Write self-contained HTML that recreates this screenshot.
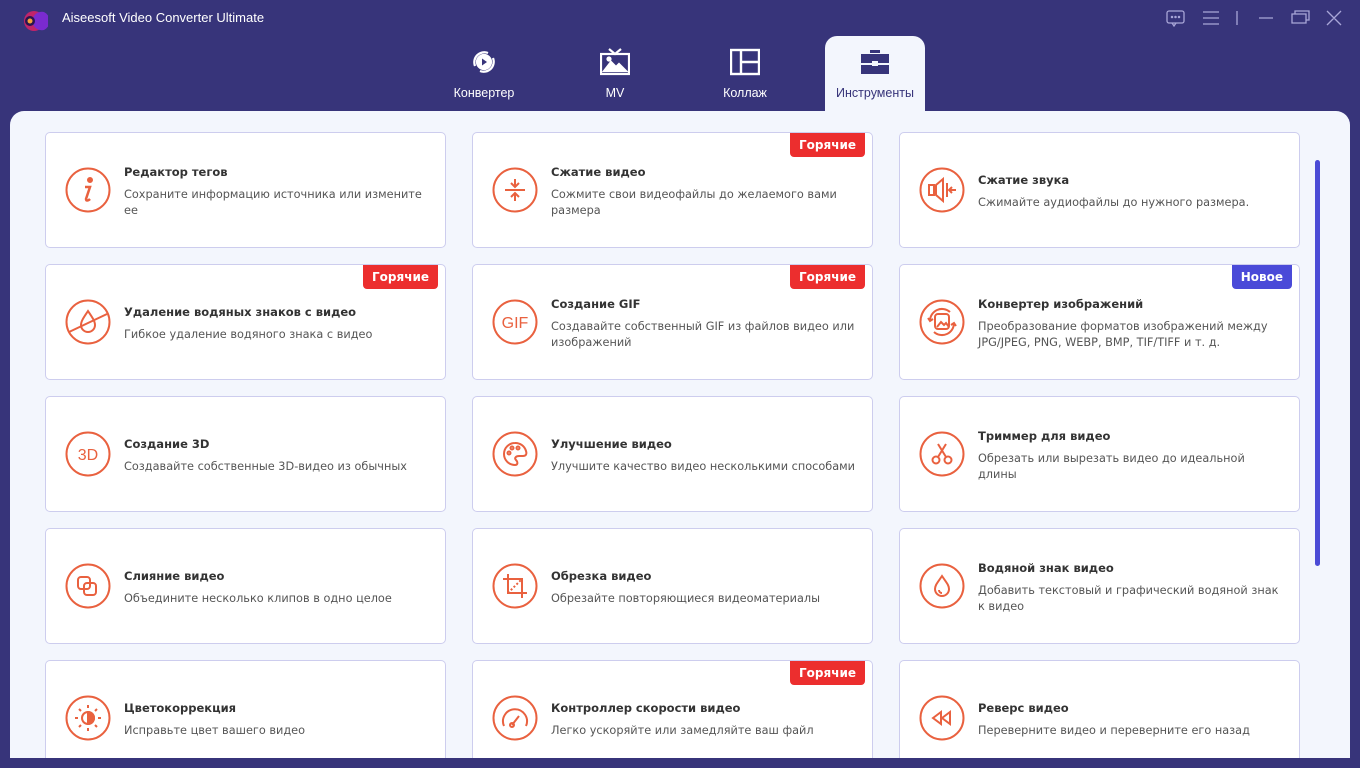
<!DOCTYPE html>
<html style="overflow:hidden"><head><meta charset="utf-8"><style>
*{margin:0;padding:0;box-sizing:border-box}
html,body{width:1360px;height:768px;overflow:hidden}
body{background:#37347a;position:relative;font-family:"DejaVu Sans","Liberation Sans",sans-serif}
.title{position:absolute;left:62px;top:10px;color:#fff;font-size:13px;font-family:"Liberation Sans",sans-serif}
.panel{position:absolute;left:10px;top:111px;width:1340px;height:647px;background:#f3f6fd;border-radius:14px 14px 0 0;overflow:hidden}
.tab{position:absolute;top:36px;width:100px;height:76px;color:#fff;font-size:12.5px;text-align:center;font-family:"Liberation Sans",sans-serif}
.tab svg{display:block;margin:11px auto 9px}
.tab.act{background:#f3f6fd;color:#37347a;border-radius:12px 12px 0 0}
.card{position:absolute;width:401px;height:116px;background:#fff;border:1px solid #cdcdee;border-radius:5px;overflow:hidden}
.card .ic{position:absolute;left:19px;top:34px;width:46px;height:46px}
.card h3{position:absolute;left:78px;font-size:11.5px;font-weight:bold;color:#333}
.card p{position:absolute;left:78px;width:310px;font-size:11.3px;color:#555;line-height:16px}
.badge{position:absolute;right:7px;top:0;height:24px;padding:0 9px;color:#fff;font-weight:bold;font-size:12px;line-height:24px;background:#ec2e2e;border-radius:0 0 4px 4px}
.badge.new{background:#4a4ad8}
.sb{position:absolute;left:1305px;top:49px;width:5px;height:406px;background:#4b4bd6;border-radius:3px}
.last{height:98px;border-bottom:none;border-radius:5px 5px 0 0}
</style></head><body>
<svg style="position:absolute;left:20px;top:8px" width="28" height="26" viewBox="0 0 28 26"><path d="M4 13a10 10 0 1 1 20 0a10 10 0 1 1-20 0z" fill="#c0246a"/><path d="M12 13a10 10 0 0 1 12-9a10 10 0 0 1 0 18a10 10 0 0 1-12-9z" fill="#7a2bd0"/><circle cx="10" cy="13" r="5" fill="#2a1550"/><circle cx="10" cy="13" r="2.5" fill="#f7a23a"/></svg>
<div class="title">Aiseesoft Video Converter Ultimate</div>
<svg style="position:absolute;left:1166px;top:9px" width="180" height="18" fill="none" stroke="#a9a6d8" stroke-width="1.3"><rect x="1" y="2" width="17" height="12" rx="2"/><path d="M6 14l2 3 2-3"/><circle cx="6" cy="8" r=".6" fill="#a9a6d8"/><circle cx="9.5" cy="8" r=".6" fill="#a9a6d8"/><circle cx="13" cy="8" r=".6" fill="#a9a6d8"/><path d="M37 3h16M37 9h16M37 15h16M71 2v14M93 9h14M126 5h14v9h-14zM129 5v-3h14v9h-3M161 2l14 14M175 2l-14 14"/></svg>
<div class="tab" style="left:434px"><svg width="30" height="30" viewBox="0 0 30 30" fill="none" stroke="#fff" stroke-width="2.2"><path d="M6 19a10 10 0 0 1 13-13M24 11a10 10 0 0 1-13 13"/><circle cx="15" cy="15" r="7" fill="#fff"/><path d="M13 11.5l5 3.5-5 3.5z" fill="#37347a" stroke="none"/></svg>Конвертер</div>
<div class="tab" style="left:565px"><svg width="30" height="30" viewBox="0 0 30 30" fill="none" stroke="#fff" stroke-width="2.2"><rect x="1" y="7" width="28" height="20"/><path d="M9 2l6 5 6-5"/><path d="M4 24l7-9 5 5 3-3 7 7z" fill="#fff"/><circle cx="9" cy="12" r="1.5" fill="#fff"/></svg>MV</div>
<div class="tab" style="left:695px"><svg width="30" height="30" viewBox="0 0 30 30" fill="none" stroke="#fff" stroke-width="2.4"><rect x="1" y="3" width="28" height="24"/><path d="M11 3v24M11 15h18"/></svg>Коллаж</div>
<div class="tab act" style="left:825px"><svg width="30" height="30" viewBox="0 0 30 30" fill="#37347a"><rect x="10" y="3" width="10" height="3"/><rect x="1" y="7" width="28" height="9"/><rect x="1" y="18" width="28" height="9"/><rect x="12" y="14" width="6" height="5" fill="#f3f6fd"/></svg>Инструменты</div>
<div class="panel"><div class="sb"></div></div>

<div class="card" style="left:45px;top:132px"><svg class="ic" viewBox="0 0 46 46" fill="none" stroke="#e9613f" stroke-width="2"><circle cx="23" cy="23" r="21.5"/><circle cx="25" cy="13" r="2" fill="#e9613f"/><path d="M20 20h5l-4 12c0 2 2 2 4 0" stroke-width="2.5"/></svg><h3 style="top:32px">Редактор тегов</h3><p style="top:54px">Сохраните информацию источника или измените ее</p></div>
<div class="card" style="left:472px;top:132px"><div class="badge">Горячие</div><svg class="ic" viewBox="0 0 46 46" fill="none" stroke="#e9613f" stroke-width="2"><circle cx="23" cy="23" r="21.5"/><path d="M13 23h20M23 12v7M19 16l4 4 4-4M23 34v-7M19 30l4-4 4 4"/></svg><h3 style="top:32px">Сжатие видео</h3><p style="top:54px">Сожмите свои видеофайлы до желаемого вами размера</p></div>
<div class="card" style="left:899px;top:132px"><svg class="ic" viewBox="0 0 46 46" fill="none" stroke="#e9613f" stroke-width="2"><circle cx="23" cy="23" r="21.5"/><rect x="10" y="18" width="5" height="10"/><path d="M17 18l7-6v22l-7-6zM28 16v14M37 23h-7M33 20l-3 3 3 3"/></svg><h3 style="top:40px">Сжатие звука</h3><p style="top:62px">Сжимайте аудиофайлы до нужного размера.</p></div>

<div class="card" style="left:45px;top:264px"><div class="badge">Горячие</div><svg class="ic" viewBox="0 0 46 46" fill="none" stroke="#e9613f" stroke-width="2"><circle cx="23" cy="23" r="21.5"/><path d="M23 12c-4 6-7 10-7 14a7 7 0 0 0 14 0c0-4-3-8-7-14zM4 33l38-18"/></svg><h3 style="top:40px">Удаление водяных знаков с видео</h3><p style="top:62px">Гибкое удаление водяного знака с видео</p></div>
<div class="card" style="left:472px;top:264px"><div class="badge">Горячие</div><svg class="ic" viewBox="0 0 46 46" fill="none" stroke="#e9613f" stroke-width="2"><circle cx="23" cy="23" r="21.5"/><text x="23" y="29" text-anchor="middle" fill="#e9613f" stroke="none" font-family="Liberation Sans" font-size="16">GIF</text></svg><h3 style="top:32px">Создание GIF</h3><p style="top:54px">Создавайте собственный GIF из файлов видео или изображений</p></div>
<div class="card" style="left:899px;top:264px"><div class="badge new">Новое</div><svg class="ic" viewBox="0 0 46 46" fill="none" stroke="#e9613f" stroke-width="2"><circle cx="23" cy="23" r="21.5"/><rect x="16" y="15" width="14" height="15" rx="3"/><path d="M18 28l4-5 3 3 2-2 3 4"/><path d="M11 22a12 12 0 0 1 20-9M35 24a12 12 0 0 1-20 9M9 19l2 3 3-2M37 27l-2-3-3 2"/></svg><h3 style="top:32px">Конвертер изображений</h3><p style="top:54px">Преобразование форматов изображений между JPG/JPEG, PNG, WEBP, BMP, TIF/TIFF и т. д.</p></div>

<div class="card" style="left:45px;top:396px"><svg class="ic" viewBox="0 0 46 46" fill="none" stroke="#e9613f" stroke-width="2"><circle cx="23" cy="23" r="21.5"/><text x="23" y="29" text-anchor="middle" fill="#e9613f" stroke="none" font-family="Liberation Sans" font-size="16">3D</text></svg><h3 style="top:40px">Создание 3D</h3><p style="top:62px;width:320px">Создавайте собственные 3D-видео из обычных</p></div>
<div class="card" style="left:472px;top:396px"><svg class="ic" viewBox="0 0 46 46" fill="none" stroke="#e9613f" stroke-width="2"><circle cx="23" cy="23" r="21.5"/><path d="M23 12a11 11 0 0 0 0 22c3 0 3-3 1-5s0-4 3-4h4c3 0 4-2 3-5a11 11 0 0 0-11-8z"/><circle cx="17" cy="22" r="1.5"/><circle cx="20" cy="17" r="1.5"/><circle cx="26" cy="17" r="1.5"/></svg><h3 style="top:40px">Улучшение видео</h3><p style="top:62px;width:320px">Улучшите качество видео несколькими способами</p></div>
<div class="card" style="left:899px;top:396px"><svg class="ic" viewBox="0 0 46 46" fill="none" stroke="#e9613f" stroke-width="2"><circle cx="23" cy="23" r="21.5"/><circle cx="17" cy="29" r="3.5"/><circle cx="29" cy="29" r="3.5"/><path d="M19 26l8-13M27 26l-8-13"/></svg><h3 style="top:32px">Триммер для видео</h3><p style="top:54px;width:290px">Обрезать или вырезать видео до идеальной длины</p></div>

<div class="card" style="left:45px;top:528px"><svg class="ic" viewBox="0 0 46 46" fill="none" stroke="#e9613f" stroke-width="2"><circle cx="23" cy="23" r="21.5"/><rect x="13" y="14" width="12" height="12" rx="3"/><rect x="19" y="20" width="12" height="12" rx="3"/></svg><h3 style="top:40px">Слияние видео</h3><p style="top:62px">Объедините несколько клипов в одно целое</p></div>
<div class="card" style="left:472px;top:528px"><svg class="ic" viewBox="0 0 46 46" fill="none" stroke="#e9613f" stroke-width="2"><circle cx="23" cy="23" r="21.5"/><path d="M16 11v19h19M11 16h19v19"/><path d="M16 30l14-14" stroke-dasharray="2 2"/></svg><h3 style="top:40px">Обрезка видео</h3><p style="top:62px">Обрезайте повторяющиеся видеоматериалы</p></div>
<div class="card" style="left:899px;top:528px"><svg class="ic" viewBox="0 0 46 46" fill="none" stroke="#e9613f" stroke-width="2"><circle cx="23" cy="23" r="21.5"/><path d="M23 13c-4 6-7 9-7 13a7 7 0 0 0 14 0c0-4-3-7-7-13zM20 27a3 3 0 0 0 3 3"/></svg><h3 style="top:32px">Водяной знак видео</h3><p style="top:54px">Добавить текстовый и графический водяной знак к видео</p></div>

<div class="card last" style="left:45px;top:660px"><svg class="ic" viewBox="0 0 46 46" fill="none" stroke="#e9613f" stroke-width="2"><circle cx="23" cy="23" r="21.5"/><circle cx="23" cy="23" r="6"/><path d="M23 17a6 6 0 0 1 0 12z" fill="#e9613f"/><path d="M23 10v3M23 33v3M10 23h3M33 23h3M14 14l2 2M30 30l2 2M14 32l2-2M30 16l2-2"/></svg><h3 style="top:40px">Цветокоррекция</h3><p style="top:62px">Исправьте цвет вашего видео</p></div>
<div class="card last" style="left:472px;top:660px"><div class="badge">Горячие</div><svg class="ic" viewBox="0 0 46 46" fill="none" stroke="#e9613f" stroke-width="2"><circle cx="23" cy="23" r="21.5"/><path d="M12 31a12 12 0 1 1 22 0M20 30l7-9"/><circle cx="20" cy="30" r="2"/></svg><h3 style="top:40px">Контроллер скорости видео</h3><p style="top:62px">Легко ускоряйте или замедляйте ваш файл</p></div>
<div class="card last" style="left:899px;top:660px"><svg class="ic" viewBox="0 0 46 46" fill="none" stroke="#e9613f" stroke-width="2"><circle cx="23" cy="23" r="21.5"/><path d="M14 23l8-6v12zM23 23l8-6v12z"/></svg><h3 style="top:40px">Реверс видео</h3><p style="top:62px">Переверните видео и переверните его назад</p></div>
<div style="position:absolute;left:0;top:758px;width:1360px;height:10px;background:#37347a"></div>
</body></html>
